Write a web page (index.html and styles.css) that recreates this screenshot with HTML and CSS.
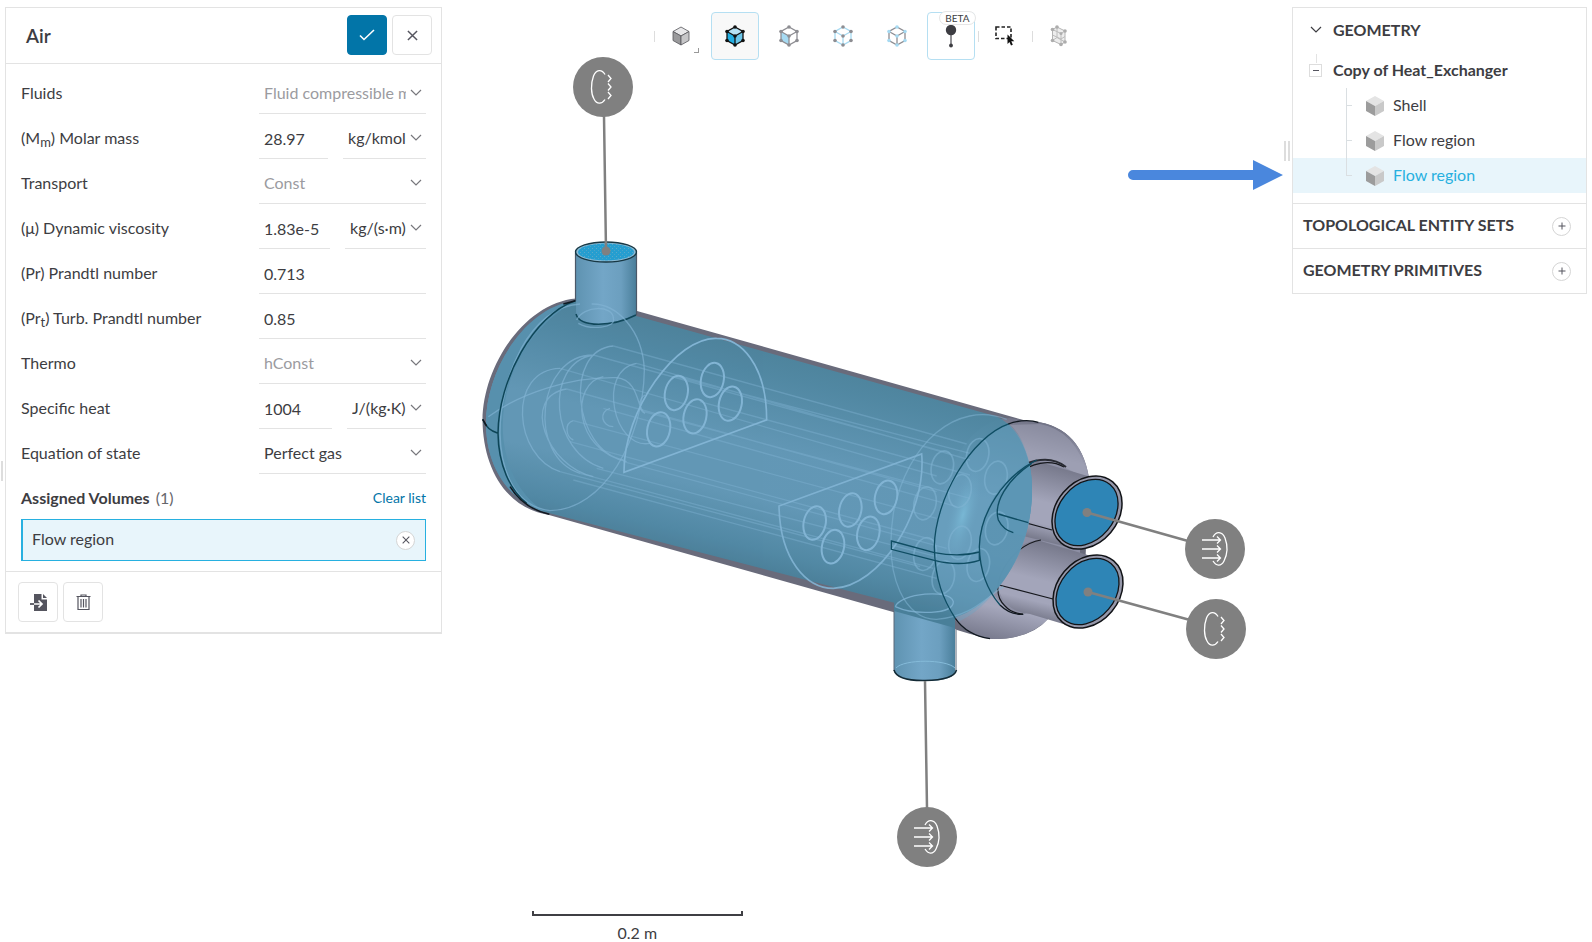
FILE: index.html
```html
<!DOCTYPE html>
<html lang="en">
<head>
<meta charset="utf-8">
<title>Air – Heat Exchanger</title>
<link rel="stylesheet" href="styles.css">
</head>
<body>
<svg class="defs" width="0" height="0" aria-hidden="true">
  <symbol id="chev" viewBox="0 0 12 8"><path d="M1 1l5 5 5-5" fill="none" stroke="currentColor" stroke-width="1.2"/></symbol>
  <symbol id="x" viewBox="0 0 12 12"><path d="M1 1l10 10M11 1L1 11" fill="none" stroke="currentColor" stroke-width="1.6"/></symbol>
  <symbol id="plus" viewBox="0 0 8 8"><path d="M4 0.500v7M0.500 4h7" fill="none" stroke="currentColor" stroke-width="1"/></symbol>
  <symbol id="solid" viewBox="0 0 18 20"><path d="M9 0l9 5-9 5-9-5z" fill="#e4e4e4"/><path d="M0 5l9 5v10l-9-5z" fill="#9c9c9c"/><path d="M18 5l-9 5v10l9-5z" fill="#c9c9c9"/></symbol>
  <symbol id="cubeedges" viewBox="0 0 20 22"><path d="M10 2l8 4.500v9L10 20l-8-4.500v-9zM2 6.500l8 4.500 8-4.500M10 11v9" fill="none" stroke="var(--edge)" stroke-width="1.300"/><g fill="var(--node)"><circle cx="10" cy="2" r="1.800"/><circle cx="18" cy="6.500" r="1.800"/><circle cx="18" cy="15.500" r="1.800"/><circle cx="10" cy="20" r="1.800"/><circle cx="2" cy="15.500" r="1.800"/><circle cx="2" cy="6.500" r="1.800"/><circle cx="10" cy="11" r="1.800"/></g></symbol>
</svg>
<div class="app">
  <div class="grip-left"></div>
  <form class="panel material">
    <header class="head">
      <h1>Air</h1>
      <button type="button" class="btn primary" aria-label="Apply"><svg width="16" height="12" viewBox="0 0 16 12"><path d="M1 6.500l4 4L15 1" fill="none" stroke="#fff" stroke-width="1.600"/></svg></button>
      <button type="button" class="btn" aria-label="Close"><svg width="11" height="11"><use href="#x"/></svg></button>
    </header>
    <div class="fields">
      <div class="row"><label for="fluids">Fluids</label><span class="ctl"><span class="sel dim"><select id="fluids"><option>Fluid compressible material</option></select><svg><use href="#chev"/></svg></span></span></div>
      <div class="row"><label for="mm">(M<sub>m</sub>) Molar mass</label><span class="ctl"><input id="mm" value="28.97"><span class="sel unit"><select aria-label="Molar mass unit"><option>kg/kmol</option></select><svg><use href="#chev"/></svg></span></span></div>
      <div class="row"><label for="transport">Transport</label><span class="ctl"><span class="sel dim"><select id="transport"><option>Const</option></select><svg><use href="#chev"/></svg></span></span></div>
      <div class="row"><label for="mu">(μ) Dynamic viscosity</label><span class="ctl"><input id="mu" value="1.83e-5"><span class="sel unit"><select aria-label="Viscosity unit"><option>kg/(s·m)</option></select><svg><use href="#chev"/></svg></span></span></div>
      <div class="row"><label for="pr">(Pr) Prandtl number</label><span class="ctl"><input id="pr" value="0.713"></span></div>
      <div class="row"><label for="prt">(Pr<sub>t</sub>) Turb. Prandtl number</label><span class="ctl"><input id="prt" value="0.85"></span></div>
      <div class="row"><label for="thermo">Thermo</label><span class="ctl"><span class="sel dim"><select id="thermo"><option>hConst</option></select><svg><use href="#chev"/></svg></span></span></div>
      <div class="row"><label for="cp">Specific heat</label><span class="ctl"><input id="cp" value="1004"><span class="sel unit"><select aria-label="Specific heat unit"><option>J/(kg·K)</option></select><svg><use href="#chev"/></svg></span></span></div>
      <div class="row"><label for="eos">Equation of state</label><span class="ctl"><span class="sel"><select id="eos"><option>Perfect gas</option></select><svg><use href="#chev"/></svg></span></span></div>
      <div class="row assigned"><h2>Assigned Volumes</h2><span class="count">(1)</span><a href="#">Clear list</a></div>
      <div class="chip"><span>Flow region</span><button type="button" class="round" aria-label="Remove Flow region"><svg width="8" height="8"><use href="#x"/></svg></button></div>
    </div>
    <footer class="foot">
      <button type="button" class="btn" aria-label="Import"><svg width="17" height="17" viewBox="0 0 17 17"><path d="M4 0h7.500v5.500H17V17H4z" fill="#55555f"/><path d="M13 0l4 4h-4z" fill="#55555f"/><path d="M0 10h4" stroke="#55555f" stroke-width="1.800"/><path d="M4 10h7.500M8.500 6.500l3.500 3.500-3.500 3.500" fill="none" stroke="#fff" stroke-width="1.700"/></svg></button>
      <button type="button" class="btn" aria-label="Delete"><svg width="15" height="17" viewBox="0 0 15 17" fill="none" stroke="#55555f" stroke-width="1.200"><path d="M0.500 2.500h14M5 2.500V1h5v1.500M2 3v12.500h11V3"/><path d="M5 5v8.500M7.500 5v8.500M10 5v8.500"/></svg></button>
    </footer>
  </form>

  <main class="viewer">
    <svg class="scene" viewBox="442 0 842 942" preserveAspectRatio="xMidYMin meet" role="img" aria-label="Heat exchanger model">
      <defs>
        <linearGradient id="body" gradientUnits="userSpaceOnUse" x1="782" y1="350" x2="731" y2="566"><stop offset="0" stop-color="#4c849d"/><stop offset=".12" stop-color="#5089a4"/><stop offset=".45" stop-color="#6299b8"/><stop offset=".68" stop-color="#6299b8"/><stop offset=".9" stop-color="#518aa6"/><stop offset="1" stop-color="#497f99"/></linearGradient>
        <linearGradient id="edge" gradientUnits="userSpaceOnUse" x1="1040" y1="420" x2="990" y2="640"><stop offset="0" stop-color="#6e7083"/><stop offset=".15" stop-color="#9a9cb0"/><stop offset=".85" stop-color="#a5a7bc"/><stop offset="1" stop-color="#77798c"/></linearGradient>
        <linearGradient id="pipe" x1="0" x2="1" y1="0" y2="0"><stop offset="0" stop-color="#5f93b1"/><stop offset=".45" stop-color="#73a6c7"/><stop offset=".75" stop-color="#6c9fbf"/><stop offset="1" stop-color="#4a7f9b"/></linearGradient>
        <linearGradient id="tube" gradientUnits="userSpaceOnUse" x1="1060" y1="462" x2="1040" y2="545"><stop offset="0" stop-color="#717385"/><stop offset=".5" stop-color="#a3a5ba"/><stop offset=".75" stop-color="#a3a5ba"/><stop offset="1" stop-color="#6b6d7e"/></linearGradient>
        <linearGradient id="tubelow" gradientUnits="userSpaceOnUse" x1="1060" y1="541" x2="1040" y2="624"><stop offset="0" stop-color="#717385"/><stop offset=".5" stop-color="#a3a5ba"/><stop offset=".75" stop-color="#a3a5ba"/><stop offset="1" stop-color="#6b6d7e"/></linearGradient>
        <radialGradient id="shine"><stop offset="0" stop-color="#83c8e4" stop-opacity=".6"/><stop offset="1" stop-color="#6da5c4" stop-opacity="0"/></radialGradient>
        <pattern id="dots" width="4" height="4" patternUnits="userSpaceOnUse"><rect width="4" height="4" fill="#259ed0"/><rect width="1" height="1" fill="#5ba9c9"/><rect x="2" y="2" width="1" height="1" fill="#4ba4c8"/></pattern>
        <clipPath id="fluid"><path d="M575 301C525 307 486 370 486 423C486 470 515 505 551 513L957 622C985 612 1032 560 1032 490C1032 455 1020 425 995 416L640 317Z"/></clipPath>
      </defs>

      <!-- shell -->
      <path d="M576 298.500C525 303 483 365 482.500 420C483 467 505 508 549 515L957 630Q990 641 1010 638Q1035 634 1048 619L1085 570L1089 478Q1080 423 1027 421L637 311Z" fill="#696b7b"/>
      <path d="M1010 418C960 420 936 490 935 547C934 600 955 635 990 639Q1030 640 1050 617L1089 478Q1080 423 1027 421Z" fill="url(#edge)"/>
      <path d="M1010 425C1030 440 1034 490 1030 525L1088 475Q1075 430 1040 424Z" fill="#a0a2b6" opacity=".5"/>
      <path d="M1047 459C1010 464 980 505 979 547C980 585 1002 614 1025 614L1080 560V475Z" fill="#8d8fa4"/>

      <!-- twin tubes -->
      <g stroke-linejoin="round">
        <path d="M1091 477L1040 462Q1024 460 1012 478Q993 500 998 520Q1001 531 1015 534L1072 548Z" fill="url(#tube)"/>
        <path d="M1091 556L1037 540Q1018 544 1007 558Q995 575 998 588Q1005 612 1030 614L1070 626Z" fill="url(#tubelow)"/>
        <path d="M1064 467C1035 450 990 486 997.500 519Q1000 529 1008 532M997.500 515L1052 530M1041 540C1010 545 985 588 1005 606Q1011 613 1023 614M999 585L1053 599" fill="none" stroke="#15171c" stroke-width="1.200"/>
        <path d="M1025 464Q1050 454 1066 467" fill="none" stroke="#292b33" stroke-width="2"/>
        <g id="port"><ellipse cx="1087" cy="512.500" rx="31" ry="40" transform="rotate(40 1087 512.500)" fill="#9698aa" stroke="#111317" stroke-width="1.500"/><ellipse cx="1086.500" cy="512.500" rx="27.500" ry="36.500" transform="rotate(40 1086.500 512.500)" fill="#2e85b6" stroke="#111317" stroke-width="1.300"/></g>
        <use href="#port" x="1" y="79"/>
      </g>

      <!-- lower nozzle -->
      <path d="M894 604L955 622V672Q953 681 924 681Q896 680 894 671Z" fill="url(#pipe)"/>
      <path d="M894 611V671M956 630V671" fill="none" stroke="#5d6878"/>
      <path d="M894 670Q897 681 925 680.500Q954 680 956.500 670" fill="none" stroke="#132a35" stroke-width="1.500"/>
      <path d="M896 668C904 659 946 659 955 668" fill="none" stroke="#85bbd9"/>
      <path d="M894 600V611L955 628V610Z" fill="#497f99"/>

      <!-- fluid volume -->
      <g opacity=".96">
        <path d="M575 301C525 307 486 370 486 423C486 470 512 503 545 512L953 618C990 608 1032 560 1032 490C1032 455 1018 425 995 416L640 317Z" fill="url(#body)"/>
        <path d="M575 301C525 307 486 370 486 423C486 470 512 503 545 512C480 470 490 350 575 301Z" fill="#5792b0"/>
      </g>
      <g clip-path="url(#fluid)">
        <path d="M1027 421C985 420 936 485 934.500 547C934 590 952 632 987 638L1040 550V425Z" fill="#6fa5c5" opacity=".4"/>
        <ellipse cx="963" cy="515" rx="14" ry="48" transform="rotate(15 963 515)" fill="url(#shine)"/>
        <path d="M1048 459C1010 464 980 505 979 547C980 585 1002 614 1025 614L1080 560V475Z" fill="#518ca9" opacity=".5"/>
        <path d="M1040 462Q1024 460 1012 478Q993 500 998 520Q1001 531 1015 534L1060 545V475Z" fill="#5c96b5"/>
      </g>

      <!-- upper nozzle -->
      <path d="M576 252V315C582 329 612 328 636 315V252Z" fill="url(#pipe)"/>
      <path d="M575.500 253V301M636.500 253V315" fill="none" stroke="#4b5868" stroke-width="1.200"/>
      <path d="M576 314C580 328 612 327 636 315" fill="none" stroke="#10475a" stroke-width="1.500"/>
      <ellipse cx="606" cy="252" rx="30.500" ry="10" fill="#8bbad4" stroke="#183844" stroke-width="1.400"/>
      <ellipse cx="606" cy="252" rx="28" ry="8.500" fill="url(#dots)"/>

      <!-- hidden tube bundle and baffles, left half -->
      <g transform="translate(470 220) scale(.333333)" fill="none" stroke="#82b4d4" stroke-width="4">
        <g stroke-opacity=".4">
          <path d="M270 445L1400 768M430 378L1490 672M370 405L1440 700M500 430L1500 720M290 507L1400 815M400 565L1460 860M310 602L1400 895M270 755L1350 1040M330 760L1390 1045M380 745L1400 1010M460 725L1430 985M310 780L1400 1075M300 665L1390 960M520 575L1500 835M620 470L1500 700M690 545L1500 765"/>
        </g>
        <g stroke-opacity=".65">
          <path d="M330 252C180 260 90 470 90 640C92 760 140 860 240 872C400 870 520 660 523 450C518 330 440 250 365 252"/>
          <path d="M270 445C110 450 130 710 270 755M290 507C150 530 230 740 370 770M370 405C200 405 170 710 330 760M370 405C220 430 240 700 400 745M430 378C280 390 310 690 460 720M400 470C300 490 310 690 470 725M500 430C380 450 430 690 540 670M310 602C280 610 290 655 310 660M420 565C385 575 395 620 430 620"/>
          <path d="M55 590C150 520 300 470 440 473C510 480 500 570 525 580M525 525C500 540 510 575 525 580"/>
          <path d="M320 300C340 255 430 255 430 295C440 325 360 330 325 310"/>
        </g>
        <path d="M890 600C890 430 810 355 740 355C620 350 460 570 462 757Z" stroke-width="5"/>
        <g stroke-width="6"><ellipse cx="619" cy="519" rx="34" ry="52" transform="rotate(12 619 519)"/><ellipse cx="727" cy="480" rx="34" ry="52" transform="rotate(12 727 480)"/><ellipse cx="781" cy="551" rx="34" ry="52" transform="rotate(12 781 551)"/><ellipse cx="675" cy="589" rx="34" ry="52" transform="rotate(12 675 589)"/><ellipse cx="566" cy="628" rx="34" ry="52" transform="rotate(12 566 628)"/></g>
        <path d="M316 242C190 285 85 480 84 640C85 735 120 810 170 850M38 598Q50 630 84 640" stroke="#0d4557" stroke-width="4.500"/>
        <path d="M316 242L280 252M120 800Q160 865 238 883M38 598L50 618" stroke="#101820" stroke-width="4.500"/>
      </g>

      <!-- right half -->
      <g transform="translate(770 380) scale(.333333)" fill="none" stroke="#82b4d4" stroke-width="4">
        <path d="M27 378C30 540 110 625 190 625C330 620 470 400 455 222Z" stroke-width="5" stroke-opacity=".9"/>
        <g stroke-width="6"><ellipse cx="134" cy="429" rx="33" ry="51" transform="rotate(12 134 429)"/><ellipse cx="241" cy="390" rx="33" ry="51" transform="rotate(12 241 390)"/><ellipse cx="348" cy="352" rx="33" ry="51" transform="rotate(12 348 352)"/><ellipse cx="295" cy="460" rx="33" ry="51" transform="rotate(12 295 460)"/><ellipse cx="189" cy="500" rx="33" ry="51" transform="rotate(12 189 500)"/></g>
        <g stroke-opacity=".55">
          <path d="M710 118C560 60 410 190 370 400C340 600 410 720 500 718C600 710 640 660 700 620"/>
          <g stroke-width="5"><ellipse cx="517" cy="262" rx="33" ry="50" transform="rotate(12 517 262)"/><ellipse cx="623" cy="225" rx="33" ry="50" transform="rotate(12 623 225)"/><ellipse cx="678" cy="293" rx="33" ry="50" transform="rotate(12 678 293)"/><ellipse cx="570" cy="333" rx="33" ry="50" transform="rotate(12 570 333)"/><ellipse cx="465" cy="370" rx="33" ry="50" transform="rotate(12 465 370)"/><ellipse cx="680" cy="445" rx="33" ry="50" transform="rotate(12 680 445)"/><ellipse cx="570" cy="488" rx="33" ry="50" transform="rotate(12 570 488)"/><ellipse cx="465" cy="522" rx="33" ry="50" transform="rotate(12 465 522)"/><ellipse cx="625" cy="555" rx="33" ry="50" transform="rotate(12 625 555)"/><ellipse cx="520" cy="592" rx="33" ry="50" transform="rotate(12 520 592)"/></g>
          <path d="M376 680C390 640 540 625 550 665C550 705 430 705 376 680" stroke-opacity=".8"/>
        </g>
        <g stroke="#0f4d63" stroke-width="4">
          <path d="M720 130C600 170 495 360 493 500C495 600 520 660 556 715M800 240C700 290 630 400 628 500C630 590 660 640 690 675"/>
          <path d="M364 483L493 518Q570 532 628 516V541Q570 560 493 541L364 508Z"/>
          <path d="M785 250C710 300 670 370 685 420Q700 450 730 458M685 402L775 428"/>
        </g>
        <path d="M715 132Q740 122 770 122Q790 122 805 127M556 715Q590 765 660 776M690 675Q720 705 760 703" stroke="#111820" stroke-width="4"/>
      </g>

      <!-- boundary condition markers -->
      <g stroke="#808080" stroke-width="2.500"><path d="M604 116L606 251M925 681L927 808M1087 512.500L1188 541M1088 592L1190 620"/></g>
      <g fill="#808080"><circle cx="606" cy="251" r="4.500"/><circle cx="1087" cy="512.500" r="4.500"/><circle cx="1088" cy="592" r="4.500"/></g>
      <g id="outlet"><circle cx="603" cy="87" r="30" fill="#808080"/><path d="M605 74.500C602 69 596 69 593.500 76C590.500 84 591 94 594 99C597 105 602 104 605 99.500M608 75l3 3.500-3 3.500M608 83.500l3 3.500-3 3.500M608 92l3 3.500-3 3.500" fill="none" stroke="#fff" stroke-width="1.300"/></g>
      <use href="#outlet" x="613" y="542"/>
      <g id="inlet"><circle cx="1215" cy="549" r="30" fill="#808080"/><path d="M1213 537C1216 531 1222 531 1225 538C1228 546 1227 555 1224 561C1221 567 1216 566 1213 561M1202 540h18M1202 549h18M1202 558h18M1217 536.500l3.500 3.500-3.500 3.500M1217 545.500l3.500 3.500-3.500 3.500M1217 554.500l3.500 3.500-3.500 3.500" fill="none" stroke="#fff" stroke-width="1.300"/></g>
      <use href="#inlet" x="-288" y="288"/>

      <!-- callout arrow -->
      <path d="M1133 170h120v-10l30 15-30 15v-10h-120a5 5 0 0 1 0-10z" fill="#4a87dd"/>
    </svg>

    <nav class="toolbar" aria-label="View tools">
      <button type="button" class="tool bar" aria-label="Render mode"><svg width="18" height="20" viewBox="0 0 18 20" stroke="#55555a" stroke-width=".8"><path d="M9 1l8 4.500-8 4.500-8-4.500z" fill="#e8e8ea"/><path d="M1 5.500l8 4.500v9l-8-4.500z" fill="#9a9a9c"/><path d="M17 5.500l-8 4.500v9l8-4.500z" fill="#c6c6c8"/></svg><i class="corner"></i></button>
      <button type="button" class="tool on fill" aria-label="Select volumes" aria-pressed="true"><svg width="20" height="22" viewBox="0 0 20 22"><path d="M10 2l8 4.500-8 4.500-8-4.500z" fill="#b5e2f5"/><path d="M2 6.500l8 4.500v9l-8-4.500z" fill="#22aee2"/><path d="M18 6.500l-8 4.500v9l8-4.500z" fill="#6bc6ea"/><use href="#cubeedges" width="20" height="22"/></svg></button>
      <button type="button" class="tool faces" aria-label="Select faces"><svg width="20" height="22" viewBox="0 0 20 22"><path d="M2 6.500l8 4.500v9l-8-4.500z" fill="#a6daf2"/><use href="#cubeedges" width="20" height="22"/></svg></button>
      <button type="button" class="tool nodes" aria-label="Select vertices"><svg width="20" height="22"><use href="#cubeedges"/></svg></button>
      <button type="button" class="tool edges" aria-label="Select edges"><svg width="20" height="22"><use href="#cubeedges"/></svg></button>
      <button type="button" class="tool on" aria-label="Probe point, beta"><svg width="12" height="24" viewBox="0 0 12 24"><path d="M6 6v15" stroke="#77777c" stroke-width="1.600"/><circle cx="6" cy="6" r="5.200" fill="#3d3d42"/><circle cx="6" cy="21.500" r="1.900" fill="#3d3d42"/></svg><span class="beta">BETA</span></button>
      <button type="button" class="tool bar" aria-label="Box select"><svg width="20" height="20" viewBox="0 0 20 20"><rect x="1" y="1" width="15" height="11.500" fill="none" stroke="#222" stroke-width="1.600" stroke-dasharray="3.500 2"/><path d="M12.500 8.500v9.500l2-2 1.500 3.500 1.800-.8-1.500-3.400h3z" fill="#111"/></svg></button>
      <button type="button" class="tool bar" aria-label="Mesh"><svg width="20" height="22" viewBox="0 0 20 22"><path d="M3.500 4.500L8 2l8 4v11l-4 2.500-8.500-4z" fill="#ededed" stroke="#b4b4b4"/><path d="M3.500 4.500l8.500 4 4-2.500M12 8.500v11M8 2v10.500l8 4.500M8 12.500l-4.500 3M3.500 10l8.500 4 4-2.500" fill="none" stroke="#bcbcbc"/><g fill="#adadad"><circle cx="3.500" cy="4.500" r="1.800"/><circle cx="8" cy="2" r="1.800"/><circle cx="16" cy="6" r="1.800"/><circle cx="12" cy="8.500" r="1.500"/><circle cx="3.500" cy="15.500" r="1.800"/><circle cx="12" cy="19.500" r="1.800"/><circle cx="16" cy="17" r="1.800"/></g></svg></button>
    </nav>

    <div class="scale"><div class="rule"></div><span>0.2 m</span></div>
  </main>

  <div class="side">
    <div class="grip-right"></div>
    <aside class="panel geometry">
      <section class="tree">
        <h2 class="title"><svg width="12" height="8"><use href="#chev"/></svg>GEOMETRY</h2>
        <div class="root"><button type="button" class="toggle" aria-label="Collapse"></button><strong>Copy of Heat_Exchanger</strong></div>
        <ul>
          <li><svg width="18" height="20"><use href="#solid"/></svg><span>Shell</span></li>
          <li><svg width="18" height="20"><use href="#solid"/></svg><span>Flow region</span></li>
          <li class="picked"><svg width="18" height="20"><use href="#solid"/></svg><span>Flow region</span></li>
        </ul>
      </section>
      <section class="group"><h2>TOPOLOGICAL ENTITY SETS</h2><button type="button" class="round" aria-label="Add entity set"><svg width="8" height="8"><use href="#plus"/></svg></button></section>
      <section class="group"><h2>GEOMETRY PRIMITIVES</h2><button type="button" class="round" aria-label="Add primitive"><svg width="8" height="8"><use href="#plus"/></svg></button></section>
    </aside>
  </div>
</div>
</body>
</html>
```
FILE: styles.css
```css
:root {
  --line: #e3e3e3;
  --text: #3d3d42;
  --accent: #27b0e0;
  --tint: #e8f5fb;
}
* { box-sizing: border-box; }
body {
  margin: 0;
  background: #fff;
  color: var(--text);
  font: 16px/20px Lato, "Open Sans", sans-serif;
  overflow: hidden;
}
h1, h2, ul { margin: 0; padding: 0; }
h2, strong { font-size: 16px; font-weight: 700; }
button, input, select { font: inherit; color: inherit; margin: 0; padding: 0; }
svg { display: block; flex: none; }
.defs { position: absolute; }

.app { display: flex; align-items: flex-start; min-height: 100vh; }
.panel { border: 1px solid var(--line); background: #fff; }

/* material panel */
.grip-left {
  align-self: center;
  width: 2px;
  height: 20px;
  margin: 0 2px 0 1px;
  background: #ddd;
}
.material { flex: 0 0 437px; margin-top: 7px; border-bottom-width: 2px; }
.head {
  display: flex;
  align-items: center;
  gap: 5px;
  padding: 7px 9px 8px 20px;
  border-bottom: 1px solid var(--line);
}
.head h1 { flex: 1; padding-top: 2px; font-size: 19px; font-weight: 600; }
.btn {
  display: flex;
  align-items: center;
  justify-content: center;
  width: 40px;
  height: 40px;
  border: 1px solid var(--line);
  border-radius: 4px;
  background: #fff;
  color: #55555f;
}
.btn.primary { border-color: #0275a8; background: #0275a8; }
.fields { padding: 5px 15px 10px; }
.row { display: flex; align-items: stretch; height: 45px; }
.row label { flex: 1; padding-top: 14px; white-space: nowrap; }
sub { font-size: 13px; line-height: 0; vertical-align: -3px; }
.ctl { display: flex; gap: 15px; width: 167px; }
.ctl input, .sel {
  flex: 1;
  width: 0;
  min-width: 0;
  border: 0;
  border-bottom: 1px solid var(--line);
  outline: 0;
  background: none;
}
.ctl input { padding: 5px 0 0 5px; }
.sel { position: relative; display: flex; }
.sel.unit { flex: none; width: auto; }
.sel select {
  width: 100%;
  border: 0;
  padding: 4px 20px 0 5px;
  appearance: none;
  background: none;
  outline: 0;
}
.sel.dim select { color: #9b9b9f; }
.sel svg {
  position: absolute;
  right: 4px;
  top: 20px;
  width: 12px;
  height: 8px;
  color: #77777c;
  pointer-events: none;
}
.assigned { align-items: center; padding-top: 3px; }
.count { flex: 1; margin-left: 6px; color: #66666b; }
.assigned a { font-size: 14px; color: #0275a8; text-decoration: none; }
.chip {
  display: flex;
  align-items: center;
  justify-content: space-between;
  height: 42px;
  padding: 0 10px 0 9px;
  border: 1px solid var(--accent);
  border-left-width: 2px;
  background: var(--tint);
}
.chip span, .root strong, li span, .group h2 { padding-bottom: 2px; }
.round {
  display: flex;
  align-items: center;
  justify-content: center;
  width: 19px;
  height: 19px;
  border: 1px solid #d5d5d5;
  border-radius: 50%;
  background: #fff;
  color: #55555f;
}
.foot { display: flex; gap: 5px; padding: 10px 12px; border-top: 1px solid var(--line); }

/* viewer */
.viewer { flex: 1; min-width: 0; display: grid; height: 100vh; }
.viewer > * { grid-area: 1 / 1; }
.scene { width: 100%; height: 100vh; }
.toolbar {
  z-index: 1;
  align-self: start;
  justify-self: center;
  display: flex;
  gap: 6px;
  padding: 12px 0 0 13px;
}
.tool {
  --edge: #8d8d92;
  --node: #8d8d92;
  position: relative;
  display: flex;
  align-items: center;
  justify-content: center;
  width: 48px;
  height: 48px;
  border: 1px solid transparent;
  border-radius: 4px;
  background: none;
}
.tool.on { border-color: #b5dff2; background: #fff; }
.tool.fill { --edge: #111; --node: #111; background: #f8f8f8; }
.tool.nodes { --edge: #a6daf2; }
.tool.edges { --node: #a6daf2; }
.tool.bar::before {
  content: "";
  position: absolute;
  left: -4px;
  top: 18px;
  width: 1px;
  height: 11px;
  background: #ddd;
}
.corner {
  position: absolute;
  right: 5px;
  bottom: 6px;
  width: 5px;
  height: 5px;
  border: solid #999;
  border-width: 0 1px 1px 0;
}
.beta {
  position: absolute;
  right: -2px;
  top: -2px;
  padding: 0 5px;
  border: 1px solid #e6e6e6;
  border-radius: 7px;
  background: #fff;
  font-size: 10px;
  line-height: 12px;
}
.scale {
  align-self: end;
  justify-self: start;
  width: 25%;
  margin: 0 0 -1px 90px;
  text-align: center;
}
.rule { height: 5px; margin-bottom: 7px; border: solid #3f3f44; border-width: 0 2px 2px; }

/* geometry panel */
.side { display: flex; align-items: center; margin: 7px 5px 0 0; }
.grip-right {
  width: 6px;
  height: 20px;
  margin-right: 2px;
  border: solid #ddd;
  border-width: 0 2px;
}
.geometry { width: 295px; }
.tree { padding-bottom: 10px; }
.title { display: flex; align-items: center; gap: 11px; height: 45px; padding: 0 0 2px 17px; }
.root { position: relative; display: flex; align-items: center; gap: 11px; height: 35px; padding-left: 16px; }
.root::before {
  content: "";
  position: absolute;
  left: 23px;
  top: 1px;
  width: 1px;
  height: 9px;
  background: var(--line);
}
.toggle { display: grid; place-items: center; width: 13px; height: 13px; border: 1px solid #ddd; background: #fff; }
.toggle::before { content: ""; width: 6px; height: 1px; background: #55555f; }
ul { list-style: none; }
li {
  position: relative;
  display: flex;
  align-items: center;
  gap: 9px;
  height: 35px;
  padding-left: 73px;
}
li::before, li::after { content: ""; position: absolute; left: 53px; background: #dadfe2; }
li::before { top: 0; width: 1px; height: 100%; }
li::after { top: 17px; width: 6px; height: 1px; }
li.picked { background: var(--tint); color: var(--accent); }
li.picked::before { height: 18px; }
.group {
  display: flex;
  align-items: center;
  justify-content: space-between;
  height: 45px;
  padding: 0 15px 0 10px;
  border-top: 1px solid var(--line);
}
```
